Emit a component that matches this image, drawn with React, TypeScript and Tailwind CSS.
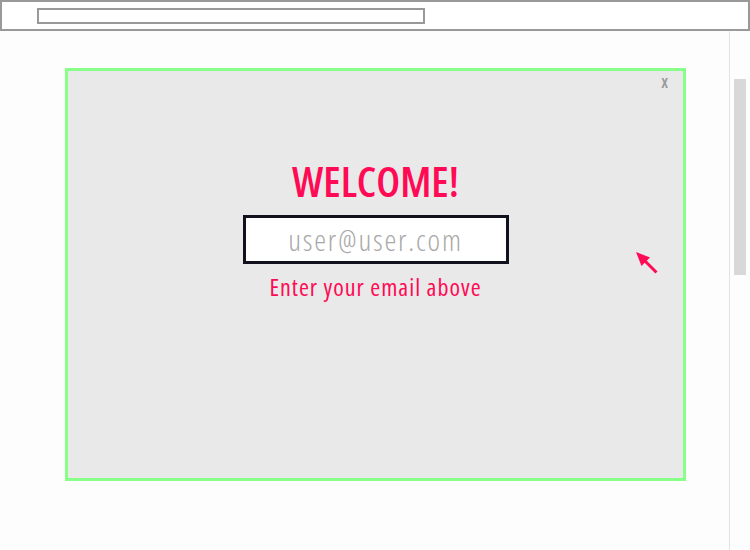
import React from "react";

const Arrow: React.FC = () => (
  <svg width="26" height="26" viewBox="0 0 26 26" className="block">
    <path d="M2 2 L16 7.5 L7.5 16 Z" fill="#ff0a55" />
    <path d="M10 10 L22.5 22.5" stroke="#ff0a55" strokeWidth="3" />
  </svg>
);

const App: React.FC = () => {
  return (
    <div
      className="w-[750px] h-[550px] bg-[#fdfdfd] flex flex-col overflow-hidden"
      style={{ fontFamily: '"Open Sans", "DejaVu Sans Condensed", sans-serif' }}
    >
      {/* address bar */}
      <div className="h-[31px] border-2 border-[#999999] bg-white shrink-0 pl-[35px] pt-[6px]">
        <div className="w-[388px] h-[16px] border-2 border-[#999999]" />
      </div>

      <div className="flex flex-1">
        <div className="flex-1 pl-[65px] pt-[37px]">
          {/* modal */}
          <div className="relative w-[621px] h-[413px] border-[3px] border-[#88ff88] bg-[#e9e9e9] flex flex-col items-center pt-[89px]">
            <span className="absolute right-[15px] top-[-2px] text-[17px] font-semibold text-[#9a9a9a] font-stretch-[75%]">x</span>
            <h1 className="text-[42px] leading-none font-semibold text-[#ff0a55] font-stretch-[75%]">WELCOME!</h1>
            <div className="mt-[13px] w-[266px] h-[49px] border-[3px] border-[#11121e] bg-white flex items-center justify-center">
              <span className="text-[30px] leading-none text-[#a9a9a9] font-light font-stretch-[75%] tracking-[1.8px]">user@user.com</span>
            </div>
            <p className="mt-[11px] text-[24px] leading-none font-medium text-[#ff0a55] font-stretch-[75%] tracking-[1px]">Enter your email above</p>
            <div className="absolute left-[566px] top-[179px]">
              <Arrow />
            </div>
          </div>
        </div>
        {/* side panel with scrollbar */}
        <div className="w-[21px] border-l border-[#e3e3e3] pl-[4px] pt-[48px]">
          <div className="w-[12px] h-[196px] bg-[#d8d8d8]" />
        </div>
      </div>
    </div>
  );
};

export default App;
